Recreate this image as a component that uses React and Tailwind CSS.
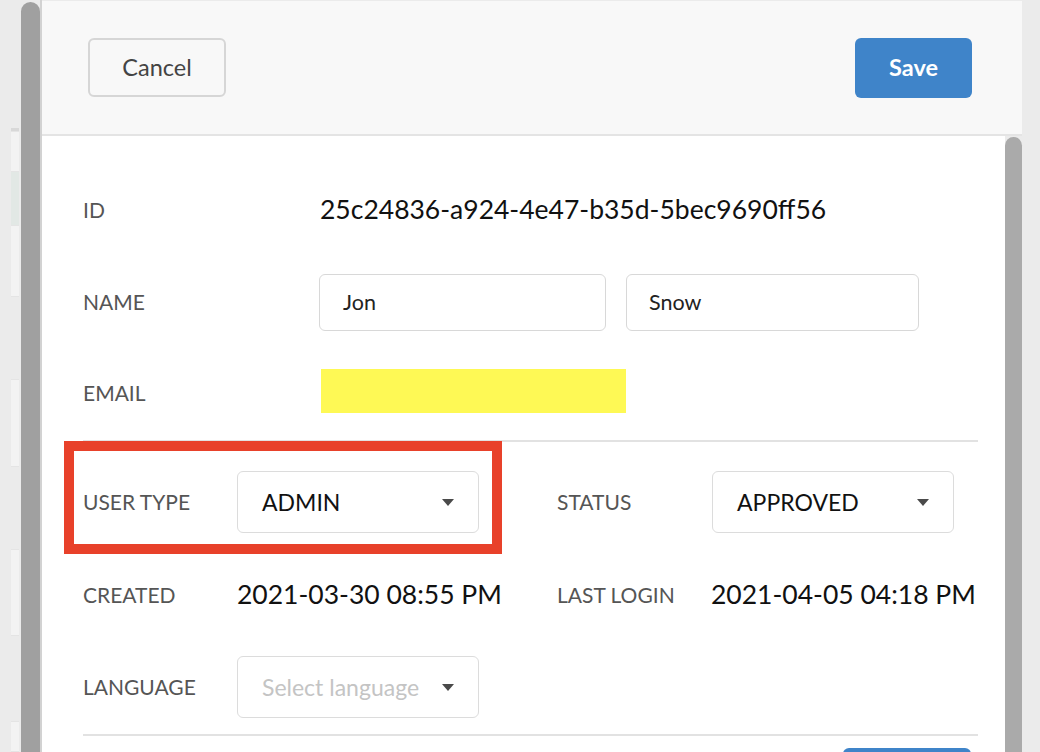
import React from "react";

const font = { fontFamily: "Lato, 'Open Sans', sans-serif" };

function Caret() {
  return (
    <svg width="12" height="7" viewBox="0 0 12 7" className="shrink-0">
      <path d="M0 0h12L6 7z" fill="#4a4a4a" />
    </svg>
  );
}

function Select({ value, placeholder }) {
  return (
    <div className="flex h-[62px] w-[242px] items-center justify-between rounded-[6px] border border-[#dcdcdc] bg-white pl-[24px] pr-[24px]">
      {value ? (
        <span className="text-[23px] text-[#111]">{value}</span>
      ) : (
        <span className="text-[23px] text-[#c4c4c4]">{placeholder}</span>
      )}
      <Caret />
    </div>
  );
}

function Label({ children, className = "" }) {
  return (
    <div className={"text-[21px] uppercase text-[#555] " + className}>
      {children}
    </div>
  );
}

const pageRows = [
  { h: 4, c: "bg-[#d8d8d8]" },
  { h: 40, c: "bg-[#f3f3f3]" },
  { h: 55, c: "bg-[#e2e8e5]" },
  { h: 71, c: "bg-[#f3f3f3]" },
  { h: 84, c: "bg-[#ebebeb]" },
  { h: 88, c: "bg-[#f3f3f3]" },
  { h: 83, c: "bg-[#ebebeb]" },
  { h: 87, c: "bg-[#f3f3f3]" },
  { h: 87, c: "bg-[#ebebeb]" },
  { h: 30, c: "bg-[#f3f3f3]" },
];

export default function App() {
  return (
    <div
      className="flex h-[752px] w-[1040px] overflow-hidden bg-[#ebebeb]"
      style={font}
    >
      {/* page behind the modal */}
      <div className="w-[11px] shrink-0" />
      <div className="flex w-[8px] shrink-0 flex-col pt-[128px]">
        {pageRows.map((r, i) => (
          <div key={i} className={r.c + " border-b border-[#e4e4e4]"} style={{ height: r.h }} />
        ))}
      </div>
      <div className="w-[2px] shrink-0" />
      {/* left scrollbar */}
      <div className="mt-[2px] w-[19px] shrink-0 rounded-t-[10px] bg-[#a0a0a0]" />
      <div className="w-[2px] shrink-0 bg-[#d2d2d2]" />

      {/* modal */}
      <div className="mt-[1px] flex w-[980px] shrink-0 flex-col">
        <div className="flex h-[135px] shrink-0 items-center justify-between border-b-2 border-[#e4e4e4] bg-[#f8f8f8] pl-[46px] pr-[50px]">
          <button className="h-[59px] w-[138px] rounded-[6px] border-2 border-[#d6d6d6] bg-[#f8f8f8] text-[23.5px] leading-none text-[#444]">
            Cancel
          </button>
          <button className="h-[60px] w-[117px] rounded-[6px] bg-[#3f84c9] text-[23.5px] font-bold leading-none text-white">
            Save
          </button>
        </div>

        <div className="flex flex-1">
          <div className="relative flex-1 bg-white pl-[41px] pr-[27px]">
            {/* ID */}
            <div className="mt-[44px] flex h-[60px] items-center">
              <Label className="w-[237px]">ID</Label>
              <div className="text-[26.5px] text-[#111]">
                25c24836-a924-4e47-b35d-5bec9690ff56
              </div>
            </div>
            {/* NAME */}
            <div className="mt-[34px] flex h-[56px] items-center">
              <Label className="w-[236px]">Name</Label>
              <div className="flex gap-[20px]">
                <div className="flex h-[57px] w-[287px] items-center rounded-[6px] border border-[#d8d8d8] pl-[23px] text-[21.5px] text-[#222]">
                  Jon
                </div>
                <div className="flex h-[57px] w-[293px] items-center rounded-[6px] border border-[#d8d8d8] pl-[22px] text-[21.5px] text-[#222]">
                  Snow
                </div>
              </div>
            </div>
            {/* EMAIL */}
            <div className="mt-[39px] flex h-[44px] items-center">
              <Label className="w-[238px] pt-[4px]">Email</Label>
              <div className="h-[44px] w-[305px] bg-[#fef955]" />
            </div>

            <div className="mt-[27px] h-[2px] bg-[#e2e2e2]" />

            {/* grid */}
            <div className="mt-[29px] flex h-[62px] items-center">
              <Label className="w-[154px]">User Type</Label>
              <Select value="ADMIN" />
              <Label className="ml-[78px] w-[155px]">Status</Label>
              <Select value="APPROVED" />
            </div>
            <div className="mt-[32px] flex h-[60px] items-center">
              <Label className="w-[154px]">Created</Label>
              <div className="w-[320px] text-[26.5px] text-[#111]">2021-03-30 08:55 PM</div>
              <Label className="w-[154px]">Last Login</Label>
              <div className="text-[26.5px] text-[#111]">2021-04-05 04:18 PM</div>
            </div>
            <div className="mt-[31px] flex h-[62px] items-center">
              <Label className="w-[154px]">Language</Label>
              <Select placeholder="Select language" />
            </div>

            <div className="mt-[16px] h-[2px] bg-[#e2e2e2]" />
            <div className="mt-[12px] flex justify-end pr-[7px]">
              <div className="h-[60px] w-[128px] rounded-[6px] bg-[#3f84c9]" />
            </div>

            {/* highlight annotation */}
            <div className="absolute left-[22px] top-[305px] h-[113px] w-[438px] border-[10px] border-[#e8412a]" />
          </div>
          {/* right scrollbar */}
          <div className="w-[17px] shrink-0 bg-[#ebebeb] pt-[1px]">
            <div className="h-full rounded-t-[9px] bg-[#aaaaaa]" />
          </div>
        </div>
      </div>
    </div>
  );
}
